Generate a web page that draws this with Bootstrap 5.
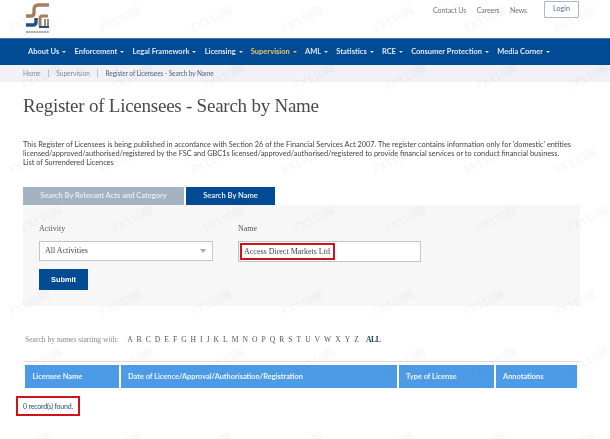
<!DOCTYPE html>
<html>

<head>
  <link href="https://cdn.jsdelivr.net/npm/bootstrap@5.3.2/dist/css/bootstrap.min.css" rel="stylesheet" type="text/css" />
  <script src="https://cdn.jsdelivr.net/npm/bootstrap@5.3.2/dist/js/bootstrap.bundle.min.js"></script>
  <style>
    body {
      font-family: Lato, "Liberation Sans", sans-serif;
      font-size: 8px;
      color: #444;
      background: #fff;
      overflow: hidden;
    }

    .top-head {
      height: 38px;
      padding: 1px 31px 0 25px;
    }

    .top-links {
      gap: 10.5px;
    }

    .top-links a {
      margin-top: 4px;
      color: #6b7480;
      font-size: 7px;
      letter-spacing: -0.1px;
      text-decoration: none;
    }

    .login-btn {
      width: 35px;
      height: 17px;
      margin-left: 6.5px;
      padding: 0;
      font-size: 7.2px;
      color: #54708c;
      border: 1px solid #a9b8c4;
      border-radius: 1px;
    }

    .main-nav {
      height: 27px;
      padding: 0 0 0 28px;
      background: #004b93;
      border-top: 1px solid #3a72a8;
      gap: 8.2px;
    }

    .main-nav a {
      color: #dfe8f2;
      font-size: 7.5px;
      font-weight: 700;
      text-decoration: none;
      white-space: nowrap;
    }

    .main-nav a.current {
      color: #e9c46a;
    }

    .main-nav a::after {
      content: "";
      display: inline-block;
      margin-left: 3px;
      vertical-align: 1px;
      border-top: 2px solid currentColor;
      border-left: 2px solid transparent;
      border-right: 2px solid transparent;
    }

    .crumbs {
      height: 17px;
      padding-left: 23px;
      background: #f1f1f6;
      font-size: 6.6px;
      color: #7d8a96;
    }

    .crumbs .sep {
      margin: 0 7px;
    }

    .crumbs .here {
      color: #4b6a88;
      letter-spacing: -0.13px;
    }

    .page-title {
      margin: 12px 0 0 23px;
      font-family: "Liberation Serif", serif;
      font-size: 19px;
      line-height: 24px;
      font-weight: 400;
      letter-spacing: -0.24px;
      color: #4a4a4a;
    }

    .intro {
      margin: 22px 30px 0 23px;
      font-size: 7.35px;
      line-height: 9px;
      color: #444;
    }

    .tab-row {
      margin: 20px 0 0 23px;
      gap: 2px;
    }

    .tab-item {
      height: 18px;
      font-size: 7.5px;
      font-weight: 700;
      color: #e6ebf1;
    }

    .tab-off {
      width: 161px;
      background: #a4b2c2;
    }

    .tab-on {
      width: 89px;
      background: #004b93;
    }

    .search-panel {
      height: 101px;
      margin: 0 30px 0 23px;
      padding: 15px 16px 0;
      background: #f7f7f7;
      font-family: "Liberation Serif", serif;
      font-size: 8px;
      color: #555;
    }

    .activity-col {
      width: 174px;
      margin-right: 25px;
    }

    .name-col {
      width: 183px;
    }

    .field-label {
      height: 21px;
      line-height: 18px;
    }

    .pick-box,
    .name-box {
      height: 20px;
      padding: 0 5px;
      font-size: 8px;
      line-height: 18px;
      color: #444;
      background: #fff;
      border: 1px solid #c4c4c4;
      border-radius: 0;
    }

    .pick-arrow {
      border-top: 4px solid #aaa;
      border-left: 3px solid transparent;
      border-right: 3px solid transparent;
      margin-right: 1px;
    }

    .name-box {
      padding: 0 1px;
      height: 21px;
    }

    .name-mark {
      height: 17px;
      padding: 0 3px 0 2px;
      border: 2px solid #d0121b;
      line-height: 13px;
      white-space: nowrap;
    }

    .submit-btn {
      width: 49px;
      height: 21px;
      margin-top: 7px;
      padding: 0;
      background: #004b93;
      border: 0;
      border-radius: 0;
      font-family: "Liberation Sans", sans-serif;
      font-size: 7.4px;
      font-weight: 700;
      color: #fff;
    }

    .letters {
      margin: 29px 0 0 25px;
      font-family: "Liberation Serif", serif;
      font-size: 7.6px;
      line-height: 10px;
      color: #8a8a8a;
    }

    .letters .prefix {
      margin-right: 7px;
    }

    .letters a {
      margin-right: 4px;
      color: #555;
      text-decoration: none;
    }

    .letters a.all {
      margin-left: 3px;
      font-weight: 700;
      color: #1f3f68;
      letter-spacing: -0.3px;
    }

    .results-rule {
      margin: 16px 30px 0 23px;
      border-top: 1px solid #ebd5e6;
    }

    .results-head {
      margin: 3px 0 0 25px;
      gap: 2px;
    }

    .head-cell {
      height: 23px;
      padding-left: 7.5px;
      background: #4d9be6;
      color: #eef5fc;
      font-size: 7.4px;
      font-weight: 700;
    }

    .w-name { width: 94px; }
    .w-date { width: 276px; padding-left: 7px; }
    .w-type { width: 95px; padding-left: 7px; }
    .w-note { width: 81px; padding-left: 7px; }

    .found-box {
      width: 64px;
      height: 20px;
      margin: 8px 0 0 16px;
      padding-left: 5px;
      border: 2px solid #d0121b;
      font-size: 7px;
      letter-spacing: -0.2px;
      color: #1f4f78;
    }

    .logo-mark {
      display: block;
    }

    .wm-layer {
      position: absolute;
      inset: 0;
      pointer-events: none;
      mix-blend-mode: multiply;
    }
  </style>
</head>

<body>
  <header class="top-head d-flex justify-content-between">
    <svg class="logo-mark" width="24" height="33" viewBox="0 0 24 33">
      <path d="M24 4H13Q9 4 9 9V12Q9 15 6 15H1" fill="none" stroke="#a5805a" stroke-width="3.4" />
      <path d="M1 24H8Q11 24 11 21V17" fill="none" stroke="#1d5488" stroke-width="3.4" />
      <path d="M23 15H17Q15 15 15 18V25" fill="none" stroke="#a5805a" stroke-width="3" />
      <path d="M20 18V25M23 18V25" fill="none" stroke="#8a6a48" stroke-width="1.6" />
      <path d="M14 26H24" fill="none" stroke="#1d5488" stroke-width="2" />
      <path d="M1 31H24" fill="none" stroke="#8d8a80" stroke-width="1.6" stroke-dasharray="2 .6" />
    </svg>
    <div class="top-links d-flex align-items-start">
      <a href="#">Contact Us</a>
      <a href="#">Careers</a>
      <a href="#">News</a>
      <button type="button" class="btn login-btn">Login</button>
    </div>
  </header>

  <nav class="main-nav d-flex align-items-center">
    <a href="#">About Us</a>
    <a href="#">Enforcement</a>
    <a href="#">Legal Framework</a>
    <a href="#">Licensing</a>
    <a href="#" class="current">Supervision</a>
    <a href="#">AML</a>
    <a href="#">Statistics</a>
    <a href="#">RCE</a>
    <a href="#">Consumer Protection</a>
    <a href="#">Media Corner</a>
  </nav>

  <div class="crumbs d-flex align-items-center">
    <span>Home</span><span class="sep">|</span><span>Supervision</span><span class="sep">|</span>
    <span class="here">Register of Licensees - Search by Name</span>
  </div>

  <main>
    <h1 class="page-title">Register of Licensees - Search by Name</h1>

    <p class="intro">
      This Register of Licensees is being published in accordance with Section 26 of the Financial Services Act 2007.
      The register contains information only for 'domestic' entities<br>licensed/approved/authorised/registered by the FSC
      and GBC1s licensed/approved/authorised/registered to provide financial services or to conduct financial business.<br>
      List of Surrendered Licences
    </p>

    <div class="tab-row d-flex">
      <div class="tab-item tab-off d-flex align-items-center justify-content-center">Search By Relevant Acts and Category</div>
      <div class="tab-item tab-on d-flex align-items-center justify-content-center">Search By Name</div>
    </div>

    <form class="search-panel">
      <div class="d-flex">
        <div class="activity-col">
          <div class="field-label">Activity</div>
          <div class="pick-box d-flex align-items-center justify-content-between">
            <span>All Activities</span><span class="pick-arrow"></span>
          </div>
        </div>
        <div class="name-col">
          <div class="field-label">Name</div>
          <div class="name-box d-flex align-items-center">
            <span class="name-mark">Access Direct Markets Ltd</span>
          </div>
        </div>
      </div>
      <button type="button" class="btn submit-btn d-block">Submit</button>
    </form>

    <div class="letters">
      <span class="prefix">Search by names starting with:</span>
      <a href="#">A</a><a href="#">B</a><a href="#">C</a><a href="#">D</a><a href="#">E</a><a href="#">F</a><a href="#">G</a><a href="#">H</a><a href="#">I</a><a href="#">J</a><a href="#">K</a><a href="#">L</a><a href="#">M</a><a href="#">N</a><a href="#">O</a><a href="#">P</a><a href="#">Q</a><a href="#">R</a><a href="#">S</a><a href="#">T</a><a href="#">U</a><a href="#">V</a><a href="#">W</a><a href="#">X</a><a href="#">Y</a><a href="#">Z</a><a href="#" class="all">ALL</a>
    </div>

    <div class="results-rule"></div>
    <div class="results-head d-flex">
      <div class="head-cell w-name d-flex align-items-center">Licensee Name</div>
      <div class="head-cell w-date d-flex align-items-center">Date of Licence/Approval/Authorisation/Registration</div>
      <div class="head-cell w-type d-flex align-items-center">Type of License</div>
      <div class="head-cell w-note d-flex align-items-center">Annotations</div>
    </div>

    <div class="found-box d-flex align-items-center">0 record(s) found.</div>
  </main>

  <!-- faint site watermark over the whole shot -->
  <svg class="wm-layer" width="610" height="439">
    <defs>
      <pattern id="wm" width="91" height="142" patternUnits="userSpaceOnUse">
        <text x="8" y="25" transform="rotate(-26 25 21)" font-family="Lato, 'Noto Sans CJK SC', sans-serif" font-size="11" font-weight="700" fill="#d5d9de" fill-opacity="0.22">FX110网</text>
        <text x="20" y="82" transform="rotate(-26 39 78)" font-family="Lato, 'Noto Sans CJK SC', sans-serif" font-size="11" font-weight="700" fill="#d5d9de" fill-opacity="0.22">FX110网</text>
      </pattern>
    </defs>
    <rect width="610" height="439" fill="url(#wm)" />
  </svg>
</body>

</html>
